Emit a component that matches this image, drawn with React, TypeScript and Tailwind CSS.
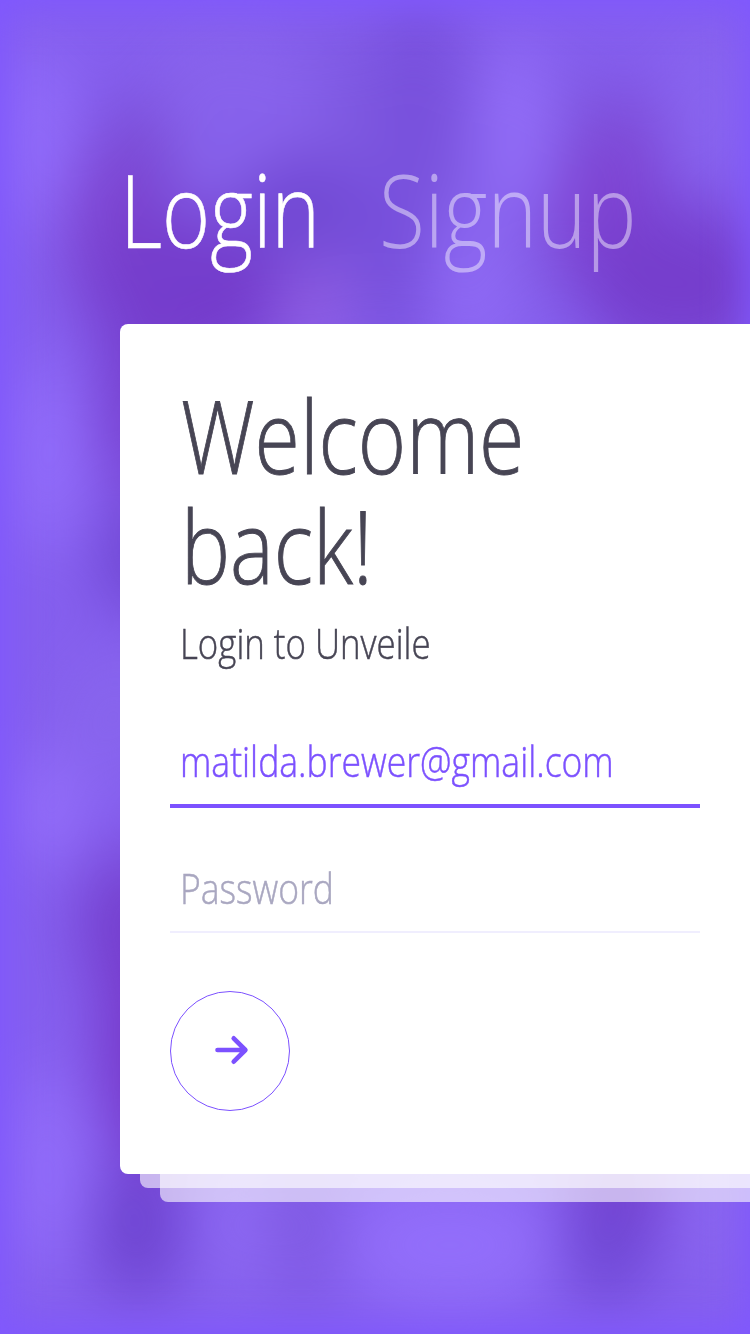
import { useState } from "react";

type Blob = { x: number; y: number; rx: number; ry: number; fill: string };

const blobs: Blob[] = [
  { x: 375, y: 180, rx: 280, ry: 150, fill: "#7f5ae2" },
  { x: 230, y: 110, rx: 90, ry: 90, fill: "#8863ec" },
  { x: 35, y: 140, rx: 42, ry: 90, fill: "#926dfb" },
  { x: 418, y: 85, rx: 45, ry: 100, fill: "#7850dc" },
  { x: 135, y: 155, rx: 42, ry: 60, fill: "#7b4fd7" },
  { x: 118, y: 240, rx: 55, ry: 95, fill: "#7c43cf" },
  { x: 185, y: 300, rx: 95, ry: 80, fill: "#743aca" },
  { x: 300, y: 210, rx: 65, ry: 50, fill: "#7046d1" },
  { x: 314, y: 312, rx: 40, ry: 48, fill: "#8e5be0" },
  { x: 395, y: 260, rx: 32, ry: 100, fill: "#764eda" },
  { x: 515, y: 130, rx: 40, ry: 90, fill: "#936ef9" },
  { x: 475, y: 290, rx: 50, ry: 80, fill: "#8e69f4" },
  { x: 622, y: 145, rx: 46, ry: 55, fill: "#7d4dd7" },
  { x: 610, y: 220, rx: 60, ry: 80, fill: "#7f43d2" },
  { x: 680, y: 285, rx: 100, ry: 80, fill: "#753ccb" },
  { x: 710, y: 105, rx: 45, ry: 85, fill: "#8965ef" },
  { x: 45, y: 455, rx: 50, ry: 95, fill: "#916cfa" },
  { x: 132, y: 395, rx: 36, ry: 110, fill: "#763fce" },
  { x: 148, y: 560, rx: 55, ry: 50, fill: "#6d44cf" },
  { x: 115, y: 715, rx: 60, ry: 65, fill: "#8865ed" },
  { x: 48, y: 810, rx: 42, ry: 55, fill: "#946ffb" },
  { x: 132, y: 925, rx: 56, ry: 75, fill: "#743fcd" },
  { x: 152, y: 1050, rx: 55, ry: 120, fill: "#7638c9" },
  { x: 45, y: 1170, rx: 45, ry: 100, fill: "#926dfa" },
  { x: 138, y: 1230, rx: 46, ry: 70, fill: "#6d43cf" },
  { x: 237, y: 1225, rx: 36, ry: 65, fill: "#8d69f2" },
  { x: 305, y: 1225, rx: 30, ry: 80, fill: "#7f59e1" },
  { x: 450, y: 1245, rx: 108, ry: 70, fill: "#936ffb" },
  { x: 618, y: 1190, rx: 46, ry: 75, fill: "#773ecb" },
  { x: 608, y: 1245, rx: 44, ry: 58, fill: "#6e46d3" },
  { x: 715, y: 1205, rx: 36, ry: 70, fill: "#8b67f0" },
];

function Backdrop() {
  return (
    <svg className="absolute inset-0 h-full w-full" viewBox="0 0 750 1334" aria-hidden="true">
      <defs>
        <filter id="soft" filterUnits="userSpaceOnUse" x="-100" y="-100" width="950" height="1534" colorInterpolationFilters="sRGB">
          <feGaussianBlur stdDeviation="28 34" />
        </filter>
        <filter id="edge" filterUnits="userSpaceOnUse" x="-100" y="-100" width="950" height="1534" colorInterpolationFilters="sRGB">
          <feGaussianBlur stdDeviation="20" />
        </filter>
      </defs>
      <rect width="750" height="1334" fill="#855fee" />
      <g filter="url(#soft)" opacity="0.94">
        {blobs.map((b, i) => (
          <ellipse key={i} cx={b.x} cy={b.y} rx={b.rx} ry={b.ry} fill={b.fill} />
        ))}
      </g>
      <path d="M774 -20H-20V1354H774V-20" fill="none" stroke="#7f57ff" strokeWidth="52" filter="url(#edge)" />
    </svg>
  );
}

export default function App() {
  const [tab, setTab] = useState<"login" | "signup">("login");
  return (
    <main className="relative h-[1334px] w-[750px] overflow-hidden bg-[#845df0] font-['Open_Sans',sans-serif] font-light">
      <Backdrop />
      <div className="relative pl-[120px]">
        <nav className="flex h-[324px] pt-[154px] text-[102px] leading-[110px] [-webkit-text-stroke:0.6px_currentColor]">
          <button
            onClick={() => setTab("login")}
            className={`block h-[110px] w-[259px] text-left whitespace-nowrap ${tab === "login" ? "text-white" : "text-white/40"}`}
          >
            <span className="inline-block origin-left scale-x-[0.805]">Login</span>
          </button>
          <button
            onClick={() => setTab("signup")}
            className={`block h-[110px] w-[300px] text-left whitespace-nowrap [-webkit-text-stroke:0px] ${tab === "signup" ? "text-white" : "text-white/45"}`}
          >
            <span className="inline-block origin-left scale-x-[0.823]">Signup</span>
          </button>
        </nav>

        <div className="relative">
          <div className="absolute -bottom-[14px] left-[20px] h-20 w-[640px] rounded-lg bg-white/60" />
          <div className="absolute -bottom-[28px] left-[40px] h-20 w-[640px] rounded-lg bg-white/60" />
          <section className="relative h-[850px] w-[640px] rounded-lg bg-white pt-[56px] pl-[50px] text-[#474554]">
            <h1 className="ml-[11px] origin-left scale-x-[0.817] text-[101px] leading-[110px] whitespace-nowrap [-webkit-text-stroke:0.9px_currentColor]">
              Welcome
              <br />
              back!
            </h1>
            <p className="mt-[13px] pl-[10px] text-[43px] leading-[60px] whitespace-nowrap [-webkit-text-stroke:0.5px_currentColor]">
              <span className="inline-block origin-left scale-x-[0.81]">Login to Unveile</span>
            </p>
            <div className="mt-[58px] flex h-[77px] w-[530px] items-start border-b-4 border-[#7c51ff] pl-[10px] text-[43px] leading-[60px] whitespace-nowrap text-[#7c51ff] [-webkit-text-stroke:0.5px_currentColor]">
              <span className="inline-block origin-left scale-x-[0.826]">matilda.brewer@gmail.com</span>
            </div>
            <div className="mt-[50px] flex h-[75px] w-[530px] items-start border-b-2 border-[#f0eefe] pl-[10px] text-[43px] leading-[60px] whitespace-nowrap text-[#a9a7c0] [-webkit-text-stroke:0.5px_currentColor]">
              <span className="inline-block origin-left scale-x-[0.825]">Password</span>
            </div>
            <button
              aria-label="Continue"
              className="mt-[58px] flex h-[120px] w-[120px] items-center justify-center rounded-full border border-[#7c51ff]"
            >
              <svg width="60" height="60" viewBox="0 0 60 60" fill="none" stroke="#7c51ff" strokeWidth="4.6" strokeLinecap="round" strokeLinejoin="round">
                <path d="M17.5 29H45M33.7 17.3L45.4 29L33.7 40.7" />
              </svg>
            </button>
          </section>
        </div>
      </div>
    </main>
  );
}
